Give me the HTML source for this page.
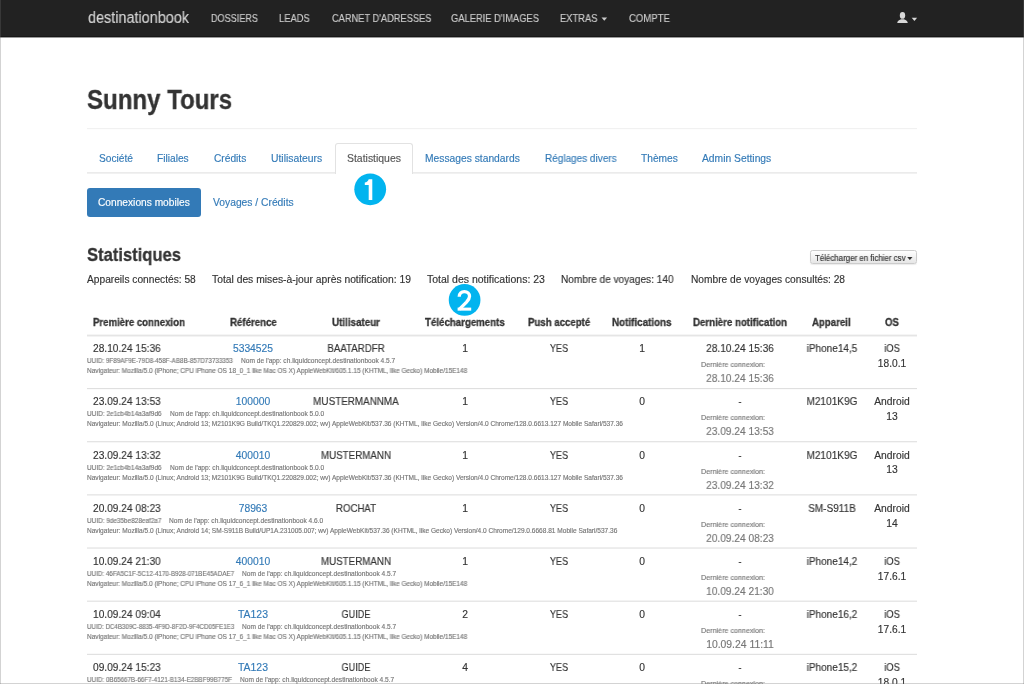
<!DOCTYPE html>
<html><head><meta charset="utf-8"><title>Statistiques</title>
<style>
html,body{margin:0;padding:0;}
body{width:1024px;height:684px;overflow:hidden;position:relative;background:#fff;font-family:"Liberation Sans",sans-serif;}
.t{position:absolute;white-space:nowrap;line-height:20px;will-change:transform;}
.badge{position:absolute;width:31.8px;height:31.8px;border-radius:50%;background:#00b3ef;color:#fff;font-family:"Liberation Sans",sans-serif;font-weight:bold;font-size:25px;line-height:31.8px;text-align:center;}
</style></head><body>
<div style="position:absolute;left:0px;top:0px;width:1024px;height:36px;background:#222;"></div><div style="position:absolute;left:0px;top:36px;width:1024px;height:1px;background:#171717;"></div><div style="position:absolute;left:0px;top:37px;width:1024px;height:1px;background:#9a9a9a;"></div><div style="position:absolute;left:87px;top:172px;width:830px;height:1px;background:rgb(235,235,235);"></div><div style="position:absolute;left:87px;top:173px;width:830px;height:1px;background:rgb(241,241,241);"></div><div style="position:absolute;left:87px;top:128px;width:830px;height:1px;background:rgb(241,241,241);"></div><div style="position:absolute;left:87px;top:129px;width:830px;height:1px;background:rgb(253,253,253);"></div><div style="position:absolute;left:87px;top:334px;width:830px;height:1px;background:#f5f5f5;"></div><div style="position:absolute;left:87px;top:335px;width:830px;height:1px;background:#e5e5e5;"></div><div style="position:absolute;left:87px;top:336px;width:830px;height:1px;background:#f3f3f3;"></div><div style="position:absolute;left:87px;top:388px;width:830px;height:1px;background:rgb(223,223,223);"></div><div style="position:absolute;left:87px;top:389px;width:830px;height:1px;background:rgb(251,251,251);"></div><div style="position:absolute;left:87px;top:441px;width:830px;height:1px;background:rgb(228,228,228);"></div><div style="position:absolute;left:87px;top:442px;width:830px;height:1px;background:rgb(246,246,246);"></div><div style="position:absolute;left:87px;top:494px;width:830px;height:1px;background:rgb(233,233,233);"></div><div style="position:absolute;left:87px;top:495px;width:830px;height:1px;background:rgb(241,241,241);"></div><div style="position:absolute;left:87px;top:547px;width:830px;height:1px;background:rgb(238,238,238);"></div><div style="position:absolute;left:87px;top:548px;width:830px;height:1px;background:rgb(236,236,236);"></div><div style="position:absolute;left:87px;top:600px;width:830px;height:1px;background:rgb(243,243,243);"></div><div style="position:absolute;left:87px;top:601px;width:830px;height:1px;background:rgb(231,231,231);"></div><div style="position:absolute;left:87px;top:653px;width:830px;height:1px;background:rgb(249,249,249);"></div><div style="position:absolute;left:87px;top:654px;width:830px;height:1px;background:rgb(225,225,225);"></div>
<!-- active tab -->
<div style="position:absolute;left:335px;top:143px;width:77.5px;height:31px;border:1px solid #e2e2e2;border-bottom:none;border-radius:3px 3px 0 0;background:#fff;box-sizing:border-box;"></div>
<!-- pill -->
<div style="position:absolute;left:87.3px;top:188px;width:113.7px;height:29px;background:#337ab7;border-radius:3px;"></div>
<!-- csv button -->
<div style="position:absolute;left:810.4px;top:250.2px;width:106.2px;height:14.3px;box-sizing:border-box;border:1px solid #ccc;border-radius:2.5px;background:linear-gradient(#fff,#e6e6e6);box-shadow:0 1px 1px rgba(0,0,0,.08);"></div>
<svg style="position:absolute;left:906px;top:256px" width="8" height="5" viewBox="906 256 8 5"><path d="M907.2 257.1 L912.5 257.1 L909.85 260.1 Z" fill="#333"/></svg>
<!-- extras caret -->
<svg style="position:absolute;left:600px;top:16px" width="9" height="6" viewBox="600 16 9 6"><path d="M601.5 17.6 L607.1 17.6 L604.3 20.8 Z" fill="#ccc"/></svg>
<!-- user icon -->
<svg style="position:absolute;left:896px;top:11px" width="24" height="14" viewBox="0 0 24 14">
 <ellipse cx="6.5" cy="4.4" rx="2.7" ry="3.4" fill="#d8d8d8"/>
 <path d="M1.2 11.9 C1.4 9.6 3.5 9 5.2 8.2 L7.8 8.2 C9.5 9 11.6 9.6 11.8 11.9 Z" fill="#d8d8d8"/>
 <path d="M15.7 6.7 L21.1 6.7 L18.4 9.9 Z" fill="#d8d8d8"/>
</svg>
<div class="t" style="top:8px;font-size:16px;color:#d2d2d2;-webkit-text-stroke:0.15px #d2d2d2;left:87.8px;transform:scaleX(0.9010);transform-origin:0 0;">destinationbook</div><div class="t" style="top:9px;font-size:10.2px;color:#cccccc;-webkit-text-stroke:0.15px #cccccc;left:211.0px;transform:scaleX(0.8917);transform-origin:0 0;">DOSSIERS</div><div class="t" style="top:9px;font-size:10.2px;color:#cccccc;-webkit-text-stroke:0.15px #cccccc;left:279.3px;transform:scaleX(0.9202);transform-origin:0 0;">LEADS</div><div class="t" style="top:9px;font-size:10.2px;color:#cccccc;-webkit-text-stroke:0.15px #cccccc;left:331.5px;transform:scaleX(0.9092);transform-origin:0 0;">CARNET D'ADRESSES</div><div class="t" style="top:9px;font-size:10.2px;color:#cccccc;-webkit-text-stroke:0.15px #cccccc;left:451.3px;transform:scaleX(0.9167);transform-origin:0 0;">GALERIE D'IMAGES</div><div class="t" style="top:9px;font-size:10.2px;color:#cccccc;-webkit-text-stroke:0.15px #cccccc;left:560.3px;transform:scaleX(0.9176);transform-origin:0 0;">EXTRAS</div><div class="t" style="top:9px;font-size:10.2px;color:#cccccc;-webkit-text-stroke:0.15px #cccccc;left:629.0px;transform:scaleX(0.9391);transform-origin:0 0;">COMPTE</div><div class="t" style="top:90px;font-size:27.5px;color:#333;font-weight:bold;-webkit-text-stroke:0.3px #333;left:87.4px;transform:scaleX(0.8739);transform-origin:0 0;">Sunny Tours</div><div class="t" style="top:149px;font-size:10.2px;color:#337ab7;-webkit-text-stroke:0.15px #337ab7;left:98.6px;">Société</div><div class="t" style="top:149px;font-size:10.2px;color:#337ab7;-webkit-text-stroke:0.15px #337ab7;left:157.3px;">Filiales</div><div class="t" style="top:149px;font-size:10.2px;color:#337ab7;-webkit-text-stroke:0.15px #337ab7;left:213.9px;">Crédits</div><div class="t" style="top:149px;font-size:10.2px;color:#337ab7;-webkit-text-stroke:0.15px #337ab7;left:270.6px;transform:scaleX(1.0167);transform-origin:0 0;">Utilisateurs</div><div class="t" style="top:149px;font-size:10.2px;color:#555;-webkit-text-stroke:0.15px #555;left:346.6px;transform:scaleX(1.0243);transform-origin:0 0;">Statistiques</div><div class="t" style="top:149px;font-size:10.2px;color:#337ab7;-webkit-text-stroke:0.15px #337ab7;left:424.9px;transform:scaleX(1.0086);transform-origin:0 0;">Messages standards</div><div class="t" style="top:149px;font-size:10.2px;color:#337ab7;-webkit-text-stroke:0.15px #337ab7;left:544.6px;transform:scaleX(0.9802);transform-origin:0 0;">Réglages divers</div><div class="t" style="top:149px;font-size:10.2px;color:#337ab7;-webkit-text-stroke:0.15px #337ab7;left:641.2px;">Thèmes</div><div class="t" style="top:149px;font-size:10.2px;color:#337ab7;-webkit-text-stroke:0.15px #337ab7;left:701.8px;transform:scaleX(1.0106);transform-origin:0 0;">Admin Settings</div><div class="t" style="top:193px;font-size:10.2px;color:#fff;-webkit-text-stroke:0.15px #fff;left:98.1px;">Connexions mobiles</div><div class="t" style="top:193px;font-size:10.2px;color:#337ab7;-webkit-text-stroke:0.15px #337ab7;left:213.1px;transform:scaleX(1.0099);transform-origin:0 0;">Voyages / Crédits</div><div class="t" style="top:245px;font-size:18px;color:#333;font-weight:bold;-webkit-text-stroke:0.3px #333;left:87.3px;transform:scaleX(0.9213);transform-origin:0 0;">Statistiques</div><div class="t" style="top:249px;font-size:8.2px;color:#333;-webkit-text-stroke:0.15px #333;left:814.9px;transform:scaleX(0.9653);transform-origin:0 0;">Télécharger en fichier csv</div><div class="t" style="top:270px;font-size:10.2px;color:#333;-webkit-text-stroke:0.15px #333;left:87.3px;">Appareils connectés: 58</div><div class="t" style="top:270px;font-size:10.2px;color:#333;-webkit-text-stroke:0.15px #333;left:212.4px;transform:scaleX(1.0123);transform-origin:0 0;">Total des mises-à-jour après notification: 19</div><div class="t" style="top:270px;font-size:10.2px;color:#333;-webkit-text-stroke:0.15px #333;left:427.3px;transform:scaleX(1.0306);transform-origin:0 0;">Total des notifications: 23</div><div class="t" style="top:270px;font-size:10.2px;color:#333;-webkit-text-stroke:0.15px #333;left:561.1px;transform:scaleX(0.9883);transform-origin:0 0;">Nombre de voyages: 140</div><div class="t" style="top:270px;font-size:10.2px;color:#333;-webkit-text-stroke:0.15px #333;left:690.8px;">Nombre de voyages consultés: 28</div><div class="t" style="top:313px;font-size:10.2px;color:#333;font-weight:bold;-webkit-text-stroke:0.3px #333;left:93.0px;transform:scaleX(0.9436);transform-origin:0 0;">Première connexion</div><div class="t" style="top:313px;font-size:10.2px;color:#333;font-weight:bold;-webkit-text-stroke:0.3px #333;left:229.5px;transform:scaleX(0.9497);transform-origin:0 0;">Référence</div><div class="t" style="top:313px;font-size:10.2px;color:#333;font-weight:bold;-webkit-text-stroke:0.3px #333;left:332.2px;transform:scaleX(0.9633);transform-origin:0 0;">Utilisateur</div><div class="t" style="top:313px;font-size:10.2px;color:#333;font-weight:bold;-webkit-text-stroke:0.3px #333;left:424.5px;transform:scaleX(0.9509);transform-origin:0 0;">Téléchargements</div><div class="t" style="top:313px;font-size:10.2px;color:#333;font-weight:bold;-webkit-text-stroke:0.3px #333;left:527.9px;transform:scaleX(0.9469);transform-origin:0 0;">Push accepté</div><div class="t" style="top:313px;font-size:10.2px;color:#333;font-weight:bold;-webkit-text-stroke:0.3px #333;left:611.8px;transform:scaleX(0.9659);transform-origin:0 0;">Notifications</div><div class="t" style="top:313px;font-size:10.2px;color:#333;font-weight:bold;-webkit-text-stroke:0.3px #333;left:692.7px;transform:scaleX(0.9499);transform-origin:0 0;">Dernière notification</div><div class="t" style="top:313px;font-size:10.2px;color:#333;font-weight:bold;-webkit-text-stroke:0.3px #333;left:812.3px;transform:scaleX(0.9469);transform-origin:0 0;">Appareil</div><div class="t" style="top:313px;font-size:10.2px;color:#333;font-weight:bold;-webkit-text-stroke:0.3px #333;left:884.5px;transform:scaleX(0.9366);transform-origin:0 0;">OS</div><div class="t" style="top:339px;font-size:10.2px;color:#333;-webkit-text-stroke:0.15px #333;left:93.0px;transform:scaleX(0.9957);transform-origin:0 0;">28.10.24 15:36</div><div class="t" style="top:339px;font-size:10.2px;color:#337ab7;-webkit-text-stroke:0.15px #337ab7;left:-46.7px;width:600px;text-align:center;transform:scaleX(1.0115);transform-origin:50% 0;">5334525</div><div class="t" style="top:339px;font-size:10.2px;color:#333;-webkit-text-stroke:0.15px #333;left:56.3px;width:600px;text-align:center;transform:scaleX(0.9527);transform-origin:50% 0;">BAATARDFR</div><div class="t" style="top:339px;font-size:10.2px;color:#333;-webkit-text-stroke:0.15px #333;left:164.5px;width:600px;text-align:center;transform:scaleX(1.0107);transform-origin:50% 0;">1</div><div class="t" style="top:339px;font-size:10.2px;color:#333;-webkit-text-stroke:0.15px #333;left:259.0px;width:600px;text-align:center;transform:scaleX(0.8854);transform-origin:50% 0;">YES</div><div class="t" style="top:339px;font-size:10.2px;color:#333;-webkit-text-stroke:0.15px #333;left:341.7px;width:600px;text-align:center;transform:scaleX(1.0107);transform-origin:50% 0;">1</div><div class="t" style="top:339px;font-size:10.2px;color:#333;-webkit-text-stroke:0.15px #333;left:439.9px;width:600px;text-align:center;transform:scaleX(0.9957);transform-origin:50% 0;">28.10.24 15:36</div><div class="t" style="top:355px;font-size:7.28px;color:#777;-webkit-text-stroke:0.15px #777;left:700.5px;transform:scaleX(0.9843);transform-origin:0 0;">Dernière connexion:</div><div class="t" style="top:369px;font-size:10.2px;color:#777;-webkit-text-stroke:0.15px #777;left:439.9px;width:600px;text-align:center;transform:scaleX(0.9957);transform-origin:50% 0;">28.10.24 15:36</div><div class="t" style="top:339px;font-size:10.2px;color:#333;-webkit-text-stroke:0.15px #333;left:531.7px;width:600px;text-align:center;transform:scaleX(0.9810);transform-origin:50% 0;">iPhone14,5</div><div class="t" style="top:339px;font-size:10.2px;color:#333;-webkit-text-stroke:0.15px #333;left:591.5px;width:600px;text-align:center;transform:scaleX(0.9199);transform-origin:50% 0;">iOS</div><div class="t" style="top:354px;font-size:10.2px;color:#333;-webkit-text-stroke:0.15px #333;left:591.5px;width:600px;text-align:center;">18.0.1</div><div class="t" style="top:351px;font-size:6.55px;color:#777;-webkit-text-stroke:0.15px #777;left:87.2px;transform:scaleX(0.9611);transform-origin:0 0;">UUID: 9F89AF9E-79D8-458F-AB8B-857D73733353</div><div class="t" style="top:351px;font-size:6.55px;color:#777;-webkit-text-stroke:0.15px #777;left:240.9px;transform:scaleX(1.0081);transform-origin:0 0;">Nom de l'app: ch.liquidconcept.destinationbook 4.5.7</div><div class="t" style="top:361px;font-size:6.55px;color:#777;-webkit-text-stroke:0.15px #777;left:87.2px;transform:scaleX(0.9859);transform-origin:0 0;">Navigateur: Mozilla/5.0 (iPhone; CPU iPhone OS 18_0_1 like Mac OS X) AppleWebKit/605.1.15 (KHTML, like Gecko) Mobile/15E148</div><div class="t" style="top:392px;font-size:10.2px;color:#333;-webkit-text-stroke:0.15px #333;left:93.0px;transform:scaleX(0.9957);transform-origin:0 0;">23.09.24 13:53</div><div class="t" style="top:392px;font-size:10.2px;color:#337ab7;-webkit-text-stroke:0.15px #337ab7;left:-46.7px;width:600px;text-align:center;transform:scaleX(1.0116);transform-origin:50% 0;">100000</div><div class="t" style="top:392px;font-size:10.2px;color:#333;-webkit-text-stroke:0.15px #333;left:56.3px;width:600px;text-align:center;transform:scaleX(0.9688);transform-origin:50% 0;">MUSTERMANNMA</div><div class="t" style="top:392px;font-size:10.2px;color:#333;-webkit-text-stroke:0.15px #333;left:164.5px;width:600px;text-align:center;transform:scaleX(1.0107);transform-origin:50% 0;">1</div><div class="t" style="top:392px;font-size:10.2px;color:#333;-webkit-text-stroke:0.15px #333;left:259.0px;width:600px;text-align:center;transform:scaleX(0.8854);transform-origin:50% 0;">YES</div><div class="t" style="top:392px;font-size:10.2px;color:#333;-webkit-text-stroke:0.15px #333;left:341.7px;width:600px;text-align:center;transform:scaleX(1.0107);transform-origin:50% 0;">0</div><div class="t" style="top:392px;font-size:10.2px;color:#333;-webkit-text-stroke:0.15px #333;left:439.9px;width:600px;text-align:center;transform:scaleX(0.8261);transform-origin:50% 0;">-</div><div class="t" style="top:408px;font-size:7.28px;color:#777;-webkit-text-stroke:0.15px #777;left:700.5px;transform:scaleX(0.9843);transform-origin:0 0;">Dernière connexion:</div><div class="t" style="top:422px;font-size:10.2px;color:#777;-webkit-text-stroke:0.15px #777;left:439.9px;width:600px;text-align:center;transform:scaleX(0.9957);transform-origin:50% 0;">23.09.24 13:53</div><div class="t" style="top:392px;font-size:10.2px;color:#333;-webkit-text-stroke:0.15px #333;left:531.7px;width:600px;text-align:center;transform:scaleX(0.9877);transform-origin:50% 0;">M2101K9G</div><div class="t" style="top:392px;font-size:10.2px;color:#333;-webkit-text-stroke:0.15px #333;left:591.5px;width:600px;text-align:center;transform:scaleX(1.0118);transform-origin:50% 0;">Android</div><div class="t" style="top:407px;font-size:10.2px;color:#333;-webkit-text-stroke:0.15px #333;left:591.5px;width:600px;text-align:center;transform:scaleX(1.0107);transform-origin:50% 0;">13</div><div class="t" style="top:404px;font-size:6.55px;color:#777;-webkit-text-stroke:0.15px #777;left:87.2px;transform:scaleX(0.9849);transform-origin:0 0;">UUID: 2e1cb4b14a3af9d6</div><div class="t" style="top:404px;font-size:6.55px;color:#777;-webkit-text-stroke:0.15px #777;left:169.6px;transform:scaleX(1.0081);transform-origin:0 0;">Nom de l'app: ch.liquidconcept.destinationbook 5.0.0</div><div class="t" style="top:414px;font-size:6.55px;color:#777;-webkit-text-stroke:0.15px #777;left:87.2px;">Navigateur: Mozilla/5.0 (Linux; Android 13; M2101K9G Build/TKQ1.220829.002; wv) AppleWebKit/537.36 (KHTML, like Gecko) Version/4.0 Chrome/128.0.6613.127 Mobile Safari/537.36</div><div class="t" style="top:446px;font-size:10.2px;color:#333;-webkit-text-stroke:0.15px #333;left:93.0px;transform:scaleX(0.9957);transform-origin:0 0;">23.09.24 13:32</div><div class="t" style="top:446px;font-size:10.2px;color:#337ab7;-webkit-text-stroke:0.15px #337ab7;left:-46.7px;width:600px;text-align:center;transform:scaleX(1.0116);transform-origin:50% 0;">400010</div><div class="t" style="top:446px;font-size:10.2px;color:#333;-webkit-text-stroke:0.15px #333;left:56.3px;width:600px;text-align:center;transform:scaleX(0.9584);transform-origin:50% 0;">MUSTERMANN</div><div class="t" style="top:446px;font-size:10.2px;color:#333;-webkit-text-stroke:0.15px #333;left:164.5px;width:600px;text-align:center;transform:scaleX(1.0107);transform-origin:50% 0;">1</div><div class="t" style="top:446px;font-size:10.2px;color:#333;-webkit-text-stroke:0.15px #333;left:259.0px;width:600px;text-align:center;transform:scaleX(0.8854);transform-origin:50% 0;">YES</div><div class="t" style="top:446px;font-size:10.2px;color:#333;-webkit-text-stroke:0.15px #333;left:341.7px;width:600px;text-align:center;transform:scaleX(1.0107);transform-origin:50% 0;">0</div><div class="t" style="top:446px;font-size:10.2px;color:#333;-webkit-text-stroke:0.15px #333;left:439.9px;width:600px;text-align:center;transform:scaleX(0.8261);transform-origin:50% 0;">-</div><div class="t" style="top:462px;font-size:7.28px;color:#777;-webkit-text-stroke:0.15px #777;left:700.5px;transform:scaleX(0.9843);transform-origin:0 0;">Dernière connexion:</div><div class="t" style="top:476px;font-size:10.2px;color:#777;-webkit-text-stroke:0.15px #777;left:439.9px;width:600px;text-align:center;transform:scaleX(0.9957);transform-origin:50% 0;">23.09.24 13:32</div><div class="t" style="top:446px;font-size:10.2px;color:#333;-webkit-text-stroke:0.15px #333;left:531.7px;width:600px;text-align:center;transform:scaleX(0.9877);transform-origin:50% 0;">M2101K9G</div><div class="t" style="top:446px;font-size:10.2px;color:#333;-webkit-text-stroke:0.15px #333;left:591.5px;width:600px;text-align:center;transform:scaleX(1.0118);transform-origin:50% 0;">Android</div><div class="t" style="top:460px;font-size:10.2px;color:#333;-webkit-text-stroke:0.15px #333;left:591.5px;width:600px;text-align:center;transform:scaleX(1.0107);transform-origin:50% 0;">13</div><div class="t" style="top:458px;font-size:6.55px;color:#777;-webkit-text-stroke:0.15px #777;left:87.2px;transform:scaleX(0.9849);transform-origin:0 0;">UUID: 2e1cb4b14a3af9d6</div><div class="t" style="top:458px;font-size:6.55px;color:#777;-webkit-text-stroke:0.15px #777;left:169.6px;transform:scaleX(1.0081);transform-origin:0 0;">Nom de l'app: ch.liquidconcept.destinationbook 5.0.0</div><div class="t" style="top:468px;font-size:6.55px;color:#777;-webkit-text-stroke:0.15px #777;left:87.2px;">Navigateur: Mozilla/5.0 (Linux; Android 13; M2101K9G Build/TKQ1.220829.002; wv) AppleWebKit/537.36 (KHTML, like Gecko) Version/4.0 Chrome/128.0.6613.127 Mobile Safari/537.36</div><div class="t" style="top:499px;font-size:10.2px;color:#333;-webkit-text-stroke:0.15px #333;left:93.0px;transform:scaleX(0.9957);transform-origin:0 0;">20.09.24 08:23</div><div class="t" style="top:499px;font-size:10.2px;color:#337ab7;-webkit-text-stroke:0.15px #337ab7;left:-46.7px;width:600px;text-align:center;transform:scaleX(1.0112);transform-origin:50% 0;">78963</div><div class="t" style="top:499px;font-size:10.2px;color:#333;-webkit-text-stroke:0.15px #333;left:56.3px;width:600px;text-align:center;transform:scaleX(0.9465);transform-origin:50% 0;">ROCHAT</div><div class="t" style="top:499px;font-size:10.2px;color:#333;-webkit-text-stroke:0.15px #333;left:164.5px;width:600px;text-align:center;transform:scaleX(1.0107);transform-origin:50% 0;">1</div><div class="t" style="top:499px;font-size:10.2px;color:#333;-webkit-text-stroke:0.15px #333;left:259.0px;width:600px;text-align:center;transform:scaleX(0.8854);transform-origin:50% 0;">YES</div><div class="t" style="top:499px;font-size:10.2px;color:#333;-webkit-text-stroke:0.15px #333;left:341.7px;width:600px;text-align:center;transform:scaleX(1.0107);transform-origin:50% 0;">0</div><div class="t" style="top:499px;font-size:10.2px;color:#333;-webkit-text-stroke:0.15px #333;left:439.9px;width:600px;text-align:center;transform:scaleX(0.8261);transform-origin:50% 0;">-</div><div class="t" style="top:515px;font-size:7.28px;color:#777;-webkit-text-stroke:0.15px #777;left:700.5px;transform:scaleX(0.9843);transform-origin:0 0;">Dernière connexion:</div><div class="t" style="top:529px;font-size:10.2px;color:#777;-webkit-text-stroke:0.15px #777;left:439.9px;width:600px;text-align:center;transform:scaleX(0.9957);transform-origin:50% 0;">20.09.24 08:23</div><div class="t" style="top:499px;font-size:10.2px;color:#333;-webkit-text-stroke:0.15px #333;left:531.7px;width:600px;text-align:center;transform:scaleX(0.9799);transform-origin:50% 0;">SM-S911B</div><div class="t" style="top:499px;font-size:10.2px;color:#333;-webkit-text-stroke:0.15px #333;left:591.5px;width:600px;text-align:center;transform:scaleX(1.0118);transform-origin:50% 0;">Android</div><div class="t" style="top:514px;font-size:10.2px;color:#333;-webkit-text-stroke:0.15px #333;left:591.5px;width:600px;text-align:center;transform:scaleX(1.0107);transform-origin:50% 0;">14</div><div class="t" style="top:511px;font-size:6.55px;color:#777;-webkit-text-stroke:0.15px #777;left:87.2px;transform:scaleX(0.9781);transform-origin:0 0;">UUID: 9de35be828eaf2a7</div><div class="t" style="top:511px;font-size:6.55px;color:#777;-webkit-text-stroke:0.15px #777;left:169.4px;transform:scaleX(1.0081);transform-origin:0 0;">Nom de l'app: ch.liquidconcept.destinationbook 4.6.0</div><div class="t" style="top:521px;font-size:6.55px;color:#777;-webkit-text-stroke:0.15px #777;left:87.2px;">Navigateur: Mozilla/5.0 (Linux; Android 14; SM-S911B Build/UP1A.231005.007; wv) AppleWebKit/537.36 (KHTML, like Gecko) Version/4.0 Chrome/129.0.6668.81 Mobile Safari/537.36</div><div class="t" style="top:552px;font-size:10.2px;color:#333;-webkit-text-stroke:0.15px #333;left:93.0px;transform:scaleX(0.9957);transform-origin:0 0;">10.09.24 21:30</div><div class="t" style="top:552px;font-size:10.2px;color:#337ab7;-webkit-text-stroke:0.15px #337ab7;left:-46.7px;width:600px;text-align:center;transform:scaleX(1.0116);transform-origin:50% 0;">400010</div><div class="t" style="top:552px;font-size:10.2px;color:#333;-webkit-text-stroke:0.15px #333;left:56.3px;width:600px;text-align:center;transform:scaleX(0.9584);transform-origin:50% 0;">MUSTERMANN</div><div class="t" style="top:552px;font-size:10.2px;color:#333;-webkit-text-stroke:0.15px #333;left:164.5px;width:600px;text-align:center;transform:scaleX(1.0107);transform-origin:50% 0;">1</div><div class="t" style="top:552px;font-size:10.2px;color:#333;-webkit-text-stroke:0.15px #333;left:259.0px;width:600px;text-align:center;transform:scaleX(0.8854);transform-origin:50% 0;">YES</div><div class="t" style="top:552px;font-size:10.2px;color:#333;-webkit-text-stroke:0.15px #333;left:341.7px;width:600px;text-align:center;transform:scaleX(1.0107);transform-origin:50% 0;">0</div><div class="t" style="top:552px;font-size:10.2px;color:#333;-webkit-text-stroke:0.15px #333;left:439.9px;width:600px;text-align:center;transform:scaleX(0.8261);transform-origin:50% 0;">-</div><div class="t" style="top:568px;font-size:7.28px;color:#777;-webkit-text-stroke:0.15px #777;left:700.5px;transform:scaleX(0.9843);transform-origin:0 0;">Dernière connexion:</div><div class="t" style="top:582px;font-size:10.2px;color:#777;-webkit-text-stroke:0.15px #777;left:439.9px;width:600px;text-align:center;transform:scaleX(0.9957);transform-origin:50% 0;">10.09.24 21:30</div><div class="t" style="top:552px;font-size:10.2px;color:#333;-webkit-text-stroke:0.15px #333;left:531.7px;width:600px;text-align:center;transform:scaleX(0.9810);transform-origin:50% 0;">iPhone14,2</div><div class="t" style="top:552px;font-size:10.2px;color:#333;-webkit-text-stroke:0.15px #333;left:591.5px;width:600px;text-align:center;transform:scaleX(0.9199);transform-origin:50% 0;">iOS</div><div class="t" style="top:567px;font-size:10.2px;color:#333;-webkit-text-stroke:0.15px #333;left:591.5px;width:600px;text-align:center;">17.6.1</div><div class="t" style="top:564px;font-size:6.55px;color:#777;-webkit-text-stroke:0.15px #777;left:87.2px;transform:scaleX(0.9579);transform-origin:0 0;">UUID: 46FA5C1F-5C12-4170-B928-071BE45ADAE7</div><div class="t" style="top:564px;font-size:6.55px;color:#777;-webkit-text-stroke:0.15px #777;left:242.1px;transform:scaleX(1.0081);transform-origin:0 0;">Nom de l'app: ch.liquidconcept.destinationbook 4.5.7</div><div class="t" style="top:574px;font-size:6.55px;color:#777;-webkit-text-stroke:0.15px #777;left:87.2px;transform:scaleX(0.9859);transform-origin:0 0;">Navigateur: Mozilla/5.0 (iPhone; CPU iPhone OS 17_6_1 like Mac OS X) AppleWebKit/605.1.15 (KHTML, like Gecko) Mobile/15E148</div><div class="t" style="top:605px;font-size:10.2px;color:#333;-webkit-text-stroke:0.15px #333;left:93.0px;transform:scaleX(0.9957);transform-origin:0 0;">10.09.24 09:04</div><div class="t" style="top:605px;font-size:10.2px;color:#337ab7;-webkit-text-stroke:0.15px #337ab7;left:-46.7px;width:600px;text-align:center;transform:scaleX(1.0252);transform-origin:50% 0;">TA123</div><div class="t" style="top:605px;font-size:10.2px;color:#333;-webkit-text-stroke:0.15px #333;left:56.3px;width:600px;text-align:center;transform:scaleX(0.8933);transform-origin:50% 0;">GUIDE</div><div class="t" style="top:605px;font-size:10.2px;color:#333;-webkit-text-stroke:0.15px #333;left:164.5px;width:600px;text-align:center;transform:scaleX(1.0107);transform-origin:50% 0;">2</div><div class="t" style="top:605px;font-size:10.2px;color:#333;-webkit-text-stroke:0.15px #333;left:259.0px;width:600px;text-align:center;transform:scaleX(0.8854);transform-origin:50% 0;">YES</div><div class="t" style="top:605px;font-size:10.2px;color:#333;-webkit-text-stroke:0.15px #333;left:341.7px;width:600px;text-align:center;transform:scaleX(1.0107);transform-origin:50% 0;">0</div><div class="t" style="top:605px;font-size:10.2px;color:#333;-webkit-text-stroke:0.15px #333;left:439.9px;width:600px;text-align:center;transform:scaleX(0.8261);transform-origin:50% 0;">-</div><div class="t" style="top:621px;font-size:7.28px;color:#777;-webkit-text-stroke:0.15px #777;left:700.5px;transform:scaleX(0.9843);transform-origin:0 0;">Dernière connexion:</div><div class="t" style="top:635px;font-size:10.2px;color:#777;-webkit-text-stroke:0.15px #777;left:439.9px;width:600px;text-align:center;transform:scaleX(1.0184);transform-origin:50% 0;">10.09.24 11:11</div><div class="t" style="top:605px;font-size:10.2px;color:#333;-webkit-text-stroke:0.15px #333;left:531.7px;width:600px;text-align:center;transform:scaleX(0.9810);transform-origin:50% 0;">iPhone16,2</div><div class="t" style="top:605px;font-size:10.2px;color:#333;-webkit-text-stroke:0.15px #333;left:591.5px;width:600px;text-align:center;transform:scaleX(0.9199);transform-origin:50% 0;">iOS</div><div class="t" style="top:620px;font-size:10.2px;color:#333;-webkit-text-stroke:0.15px #333;left:591.5px;width:600px;text-align:center;">17.6.1</div><div class="t" style="top:617px;font-size:6.55px;color:#777;-webkit-text-stroke:0.15px #777;left:87.2px;transform:scaleX(0.9433);transform-origin:0 0;">UUID: DC4B309C-8835-4F9D-8F2D-9F4CD05FE1E3</div><div class="t" style="top:617px;font-size:6.55px;color:#777;-webkit-text-stroke:0.15px #777;left:242.2px;transform:scaleX(1.0081);transform-origin:0 0;">Nom de l'app: ch.liquidconcept.destinationbook 4.5.7</div><div class="t" style="top:627px;font-size:6.55px;color:#777;-webkit-text-stroke:0.15px #777;left:87.2px;transform:scaleX(0.9859);transform-origin:0 0;">Navigateur: Mozilla/5.0 (iPhone; CPU iPhone OS 17_6_1 like Mac OS X) AppleWebKit/605.1.15 (KHTML, like Gecko) Mobile/15E148</div><div class="t" style="top:658px;font-size:10.2px;color:#333;-webkit-text-stroke:0.15px #333;left:93.0px;transform:scaleX(0.9957);transform-origin:0 0;">09.09.24 15:23</div><div class="t" style="top:658px;font-size:10.2px;color:#337ab7;-webkit-text-stroke:0.15px #337ab7;left:-46.7px;width:600px;text-align:center;transform:scaleX(1.0252);transform-origin:50% 0;">TA123</div><div class="t" style="top:658px;font-size:10.2px;color:#333;-webkit-text-stroke:0.15px #333;left:56.3px;width:600px;text-align:center;transform:scaleX(0.8933);transform-origin:50% 0;">GUIDE</div><div class="t" style="top:658px;font-size:10.2px;color:#333;-webkit-text-stroke:0.15px #333;left:164.5px;width:600px;text-align:center;transform:scaleX(1.0107);transform-origin:50% 0;">4</div><div class="t" style="top:658px;font-size:10.2px;color:#333;-webkit-text-stroke:0.15px #333;left:259.0px;width:600px;text-align:center;transform:scaleX(0.8854);transform-origin:50% 0;">YES</div><div class="t" style="top:658px;font-size:10.2px;color:#333;-webkit-text-stroke:0.15px #333;left:341.7px;width:600px;text-align:center;transform:scaleX(1.0107);transform-origin:50% 0;">0</div><div class="t" style="top:658px;font-size:10.2px;color:#333;-webkit-text-stroke:0.15px #333;left:439.9px;width:600px;text-align:center;transform:scaleX(0.8261);transform-origin:50% 0;">-</div><div class="t" style="top:674px;font-size:7.28px;color:#777;-webkit-text-stroke:0.15px #777;left:700.5px;transform:scaleX(0.9843);transform-origin:0 0;">Dernière connexion:</div><div class="t" style="top:688px;font-size:10.2px;color:#777;-webkit-text-stroke:0.15px #777;left:439.9px;width:600px;text-align:center;transform:scaleX(0.9957);transform-origin:50% 0;">09.09.24 15:23</div><div class="t" style="top:658px;font-size:10.2px;color:#333;-webkit-text-stroke:0.15px #333;left:531.7px;width:600px;text-align:center;transform:scaleX(0.9810);transform-origin:50% 0;">iPhone15,2</div><div class="t" style="top:658px;font-size:10.2px;color:#333;-webkit-text-stroke:0.15px #333;left:591.5px;width:600px;text-align:center;transform:scaleX(0.9199);transform-origin:50% 0;">iOS</div><div class="t" style="top:673px;font-size:10.2px;color:#333;-webkit-text-stroke:0.15px #333;left:591.5px;width:600px;text-align:center;">18.0.1</div><div class="t" style="top:670px;font-size:6.55px;color:#777;-webkit-text-stroke:0.15px #777;left:87.2px;transform:scaleX(0.9604);transform-origin:0 0;">UUID: 0B65667B-66F7-4121-B134-E2BBF99B775F</div><div class="t" style="top:670px;font-size:6.55px;color:#777;-webkit-text-stroke:0.15px #777;left:240.0px;transform:scaleX(1.0081);transform-origin:0 0;">Nom de l'app: ch.liquidconcept.destinationbook 4.5.7</div><div class="t" style="top:680px;font-size:6.55px;color:#777;-webkit-text-stroke:0.15px #777;left:87.2px;transform:scaleX(0.9859);transform-origin:0 0;">Navigateur: Mozilla/5.0 (iPhone; CPU iPhone OS 18_0_1 like Mac OS X) AppleWebKit/605.1.15 (KHTML, like Gecko) Mobile/15E148</div>

<svg style="position:absolute;left:0;top:0" width="1024" height="684" viewBox="0 0 1024 684">
 <circle cx="370.2" cy="189.3" r="15.9" fill="#02b4ef"/>
 <path d="M368.7 179.3 L372.3 179.3 L372.3 199.9 L368.7 199.9 L368.7 185.1 L364.8 185.1 L364.8 182.5 C366.6 182.3 368.2 181.3 368.7 179.3 Z" fill="#fff"/>
 <circle cx="464.6" cy="299.95" r="15.85" fill="#02b4ef"/>
 <path d="M459.2 296.7 C459.2 293.4 461.4 291.55 464.35 291.55 C467.4 291.55 469.55 293.5 469.55 296.3 C469.55 298.6 468.3 300.2 466.5 302.1 L459.3 309.3" fill="none" stroke="#fff" stroke-width="3.3"/>
 <rect x="457.6" y="307.6" width="13.6" height="3.05" fill="#fff"/>
</svg>

<!-- page frame -->
<div style="position:absolute;left:0;top:0;width:1px;height:684px;background:rgba(110,110,110,.3);"></div>
<div style="position:absolute;left:1023px;top:0;width:1px;height:684px;background:rgba(110,110,110,.3);"></div>
<div style="position:absolute;left:0;top:683px;width:1024px;height:1px;background:rgba(110,110,110,.3);"></div>
</body></html>
